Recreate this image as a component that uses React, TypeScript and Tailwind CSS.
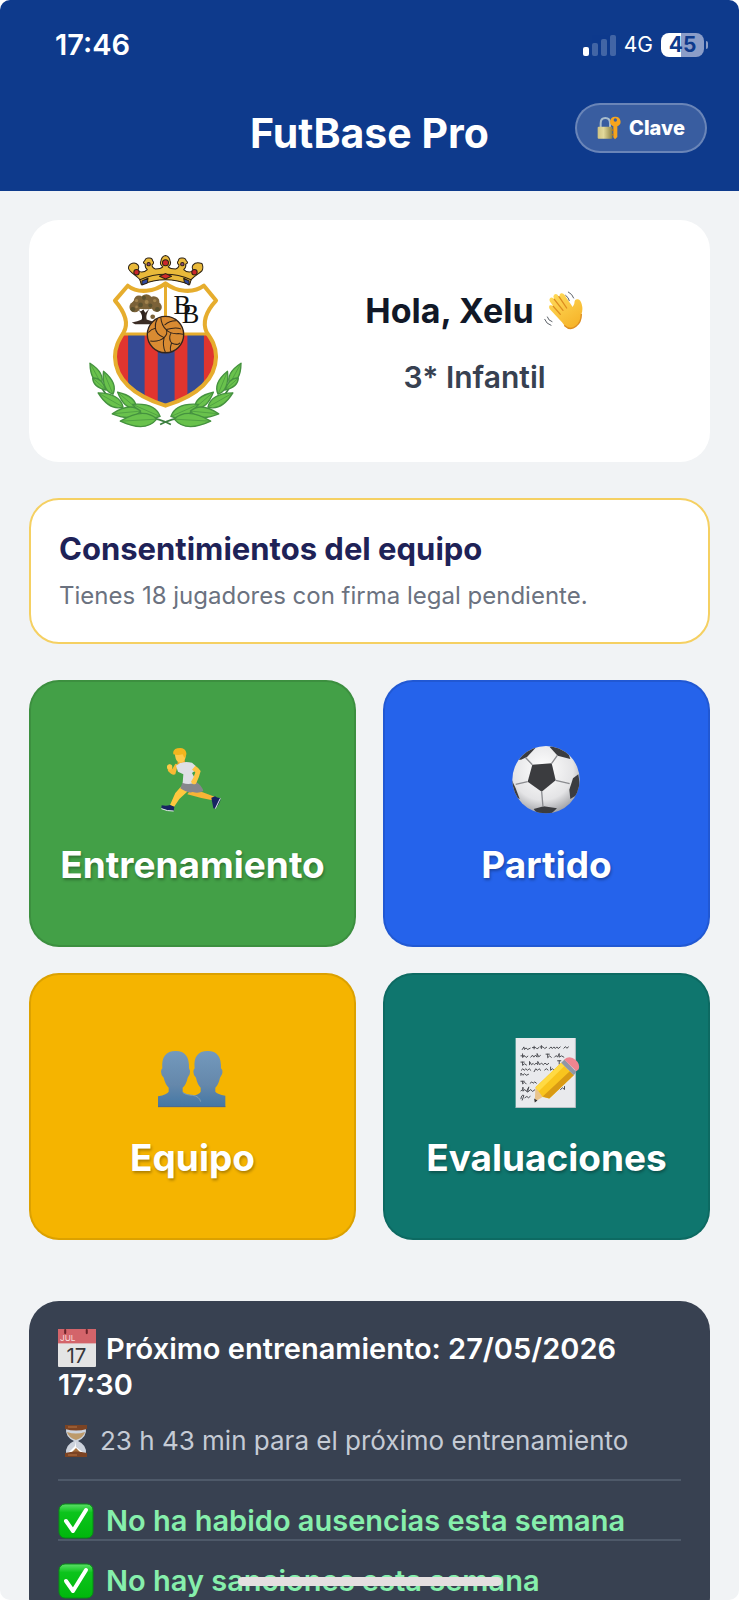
import type { ReactNode } from "react";

type IconProps = { className?: string };

const leaves = [
  [64, 364, 98, 426],
  [104, 388, 132, 456],
  [88, 452, 162, 494],
  [146, 450, 202, 498],
  [112, 444, 72, 408],
  [190, 486, 272, 522],
  [130, 514, 214, 506],
  [154, 536, 262, 530],
];

function leafPath([x1, y1, x2, y2]: number[]) {
  const nx = -(y2 - y1) * 0.36;
  const ny = (x2 - x1) * 0.36;
  const mx = (x1 + x2 * 2) / 3;
  const my = (y1 + y2 * 2) / 3;
  return `M${x1} ${y1}Q${mx + nx} ${my + ny} ${x2} ${y2}Q${mx - nx} ${my - ny} ${x1} ${y1}Z`;
}

function Branch() {
  return (
    <g>
      <path d="M68 372C92 452 150 512 232 524Q270 528 304 546" fill="none" stroke="#3d8040" strokeWidth="5" />
      {leaves.map((l) => (
        <g key={l.join()} stroke="#45923f" strokeLinejoin="round">
          <path d={leafPath(l)} fill="#69c24c" strokeWidth="4" />
          <path d={`M${l[0]} ${l[1]}L${l[2]} ${l[3]}`} strokeWidth="2" />
        </g>
      ))}
    </g>
  );
}

function Crest({ className }: IconProps) {
  const shield =
    "M176 134C206 158 256 152 288 127C320 152 370 158 402 134L438 178C412 206 396 240 410 272C424 292 438 312 438 345C436 420 370 464 288 490C206 464 140 420 138 345C138 312 152 292 164 272C182 240 162 206 138 178Z";
  return (
    <svg viewBox="58 40 460 516" className={className} role="img" aria-label="Escudo del club">
      <defs>
        <clipPath id="shield">
          <path d={shield} />
        </clipPath>
      </defs>
      <Branch />
      <g transform="translate(576 0) scale(-1 1)">
        <Branch />
      </g>
      <g clipPath="url(#shield)">
        <path d="M120 110H450V280H120Z" fill="#fff" />
        <path d="M120 278H450V500H120Z" fill="#e0352f" />
        <path d="M177 278H226V500H177ZM265 278H315V500H265ZM353 278H402V500H353Z" fill="#354a94" />
        <path d="M130 277H446M288 120V240" stroke="#e6ad2e" strokeWidth="9" />
      </g>
      <path d={shield} fill="none" stroke="#e6ad2e" strokeWidth="12" strokeLinejoin="round" />
      <path d="M188 243Q205 240 218 234Q222 222 208 206L218 212L222 204L228 214L240 202Q228 222 232 234Q246 238 258 243L250 248H198Z" fill="#3a2c24" />
      <g fill="#7b6238">
        <ellipse cx="229" cy="187" rx="40" ry="17" />
        <circle cx="197" cy="197" r="16" />
        <circle cx="209" cy="178" r="15" />
        <circle cx="231" cy="176" r="17" />
        <circle cx="253" cy="182" r="17" />
        <circle cx="262" cy="197" r="15" />
        <circle cx="250" cy="226" r="7" />
      </g>
      <g fill="#5a512f">
        <circle cx="191" cy="204" r="7" />
        <circle cx="214" cy="191" r="7" />
        <circle cx="243" cy="193" r="6" />
        <circle cx="264" cy="204" r="7" />
        <circle cx="224" cy="170" r="6" />
      </g>
      <g fill="#a0824d">
        <circle cx="202" cy="178" r="5" />
        <circle cx="232" cy="182" r="6" />
        <circle cx="256" cy="178" r="5" />
        <circle cx="202" cy="197" r="4" />
      </g>
      <path d="M220 236Q226 222 218 208" stroke="#2d231e" strokeWidth="7" fill="none" />
      <g fontFamily="'Liberation Serif', serif" fontSize="78" fill="#111">
        <text x="312" y="217">B</text>
        <text x="336" y="246">B</text>
      </g>
      <circle cx="288" cy="279" r="54" fill="#d98b32" stroke="#33251c" strokeWidth="4" />
      <g fill="none" stroke="#33251c" strokeWidth="3" strokeLinecap="round">
        <path d="M274 228Q276 252 290 264Q318 256 333 262M290 264Q296 276 284 288M284 288Q258 278 258 258Q256 246 264 232M258 260Q246 262 238 272M284 288Q266 302 244 298M284 288Q278 312 288 332M290 264Q302 278 326 276L340 278M304 274Q296 292 306 304Q322 312 330 304M306 304Q300 322 304 328M286 250Q300 238 318 238" />
      </g>
      <g stroke="#2c2114" strokeWidth="3" strokeLinejoin="round">
        <path d="M212 116C204 104 176 92 178 80C180 66 198 62 206 72C212 80 204 90 204 90Q222 98 234 86Q226 80 228 70Q218 66 226 60Q230 50 238 52Q248 50 250 60Q256 66 248 72Q248 82 258 84Q274 84 280 78Q270 70 274 62Q276 46 288 44Q300 46 302 62Q306 70 296 78Q302 84 318 84Q328 82 328 72Q320 66 326 60Q328 50 338 52Q346 50 350 60Q358 66 348 70Q350 80 342 86Q354 98 372 90Q364 80 370 72Q378 62 396 68Q402 80 396 90C388 98 374 104 364 116L358 130Q288 100 218 130Z" fill="#e9b93a" />
        <path d="M212 116Q288 84 364 116L360 130Q288 102 216 130Z" fill="#e9b93a" />
        <path d="M270 106L288 98L306 106L288 114Z" fill="#cf2a2a" />
        <path d="M218 120L236 112L234 126L218 132ZM358 120L342 112L344 124L358 132Z" fill="#30489c" />
        <circle cx="202" cy="94" r="8" fill="#c9262b" />
        <circle cx="374" cy="94" r="8" fill="#c9262b" />
        <circle cx="288" cy="66" r="9" fill="#c9262b" />
        <circle cx="238" cy="70" r="5" fill="#8a4a78" />
        <circle cx="338" cy="70" r="5" fill="#8a4a78" />
      </g>
    </svg>
  );
}

function LockKey({ className }: IconProps) {
  return (
    <svg viewBox="0 0 72 72" className={className} aria-hidden="true">
      <defs>
        <linearGradient id="lock">
          <stop offset="0" stopColor="#cfc383" />
          <stop offset=".4" stopColor="#e2d99a" />
          <stop offset="1" stopColor="#8d8243" />
        </linearGradient>
      </defs>
      <path d="M11 36V22Q11 6 25 6Q39 6 39 22V36" fill="none" stroke="#a9bccb" strokeWidth="6" />
      <rect x="2" y="32" width="44" height="36" rx="3" fill="url(#lock)" />
      <path d="M55 2A15 15 0 0 0 49 31V64L54 70L61 63V31A15 15 0 0 0 55 2ZM55 7A5 5 0 0 1 55 17A5 5 0 0 1 55 7Z" fill="#f6a41c" fillRule="evenodd" />
      <path d="M49 38L43 42L49 46M49 52L44 56L49 60" fill="#c77b10" />
    </svg>
  );
}

function Wave({ className }: IconProps) {
  return (
    <svg viewBox="0 0 120 120" className={className} aria-hidden="true">
      <defs>
        <linearGradient id="hand" x1="0" y1="0" x2=".6" y2="1">
          <stop offset="0" stopColor="#ffdc5c" />
          <stop offset="1" stopColor="#f6b52b" />
        </linearGradient>
      </defs>
      <path d="M54 94L17 54Q13 46 18 43Q23 41 28 46L18 32Q14 23 20 20Q26 18 31 25L28 17Q29 8 36 9Q41 10 45 17L48 21Q44 10 51 7Q57 5 62 12L86 48Q92 40 92 30Q94 23 102 25Q110 27 113 39Q118 56 112 70Q112 94 96 106Q79 120 62 104Z" fill="url(#hand)" />
      <path d="M31 25L57 58M45 17L68 51M28 46L49 70M62 104Q79 120 96 106Q112 94 112 70" fill="none" stroke="#dd8d20" strokeWidth="4" strokeLinecap="round" />
      <path d="M65 13Q74 19 76 29M73 3Q85 9 89 21M10 78Q13 89 24 92M2 85Q7 99 21 103" fill="none" stroke="#5c6168" strokeWidth="3" strokeLinecap="round" />
    </svg>
  );
}

function Runner({ className }: IconProps) {
  return (
    <svg viewBox="52 48 210 210" className={className} aria-hidden="true">
      <path d="M150 182L186 190L222 203L216 214L182 207L140 196Z" fill="#f7b436" />
      <path d="M122 172L142 186L116 210L100 234L88 228L104 192Z" fill="#ffc83e" />
      <path d="M212 206L223 202Q230 208 239 207Q241 216 234 226L224 239L218 238Z" fill="#172462" />
      <path d="M239 208L224 239" stroke="#e7e9ef" strokeWidth="3" />
      <path d="M88 228L101 233L99 246Q78 246 62 238L63 229Q78 232 88 228Z" fill="#172462" />
      <path d="M62 239Q80 247 99 246" stroke="#e7e9ef" strokeWidth="3" fill="none" />
      <path d="M126 160L166 158Q184 170 188 186Q174 194 156 189Q142 194 119 178Z" fill="#85868c" />
      <path d="M112 106L104 136Q94 140 82 126L80 112L88 106L95 120L104 104Z" fill="#f9b934" />
      <circle cx="87" cy="114" r="8" fill="#ffca48" />
      <path d="M110 106H134L132 92H112Z" fill="#eea52f" />
      <path d="M106 110Q124 94 154 101L166 112L162 126L154 132L168 158Q148 170 126 162L128 136L112 128Z" fill="#dedfe5" />
      <path d="M164 110Q176 118 180 126Q176 144 166 164Q156 170 151 158L158 146L164 130L154 122Z" fill="#ffc444" />
      <path d="M102 72Q106 62 122 62Q136 68 135 84Q132 102 118 101Q106 98 104 84Z" fill="#ffc94a" />
      <path d="M98 76Q95 62 110 58Q130 53 136 68Q140 78 131 86L126 76Q112 80 98 76Z" fill="#f3b51e" />
    </svg>
  );
}

function Ball({ className }: IconProps) {
  return (
    <svg viewBox="65 48 210 210" className={className} aria-hidden="true">
      <defs>
        <radialGradient id="ball" cx=".45" cy=".35" r=".65">
          <stop offset="0" stopColor="#fff" />
          <stop offset=".7" stopColor="#e4e4e6" />
          <stop offset="1" stopColor="#a5a6aa" />
        </radialGradient>
        <clipPath id="ballClip">
          <circle cx="167" cy="152" r="101" />
        </clipPath>
      </defs>
      <circle cx="167" cy="152" r="101" fill="url(#ball)" />
      <g clipPath="url(#ballClip)">
        <g fill="#3b3c3f">
          <path d="M126 107L184 103L196 154L154 188L112 158Z" />
          <path d="M92 92L110 84L136 56L110 50L76 92Z" />
          <path d="M178 54L202 80L240 90L228 54L190 46Z" />
          <path d="M264 136L248 148L237 182L240 210L272 190Z" />
          <path d="M62 148L76 178L88 210L64 200Z" />
          <path d="M130 240L160 232L200 238L176 260H146Z" />
        </g>
        <path d="M126 107L106 86M184 103L201 79M196 154L238 164M154 188L158 234M112 158L76 166" stroke="#8b8c90" strokeWidth="4" />
      </g>
    </svg>
  );
}

function People({ className }: IconProps) {
  return (
    <svg viewBox="54 27 210 210" className={className} aria-hidden="true">
      <defs>
        <linearGradient id="people" x1="0" y1="0" x2="0" y2="1">
          <stop offset="0" stopColor="#7399bd" />
          <stop offset=".6" stopColor="#6588ab" />
          <stop offset="1" stopColor="#4377a5" />
        </linearGradient>
      </defs>
      <path d="M203 66C232 66 244 84 243 118Q250 124 246 136L240 146Q236 166 226 176V188Q232 196 256 200V234H152V202Q180 196 182 188V176Q172 166 168 146Q160 138 160 128Q160 122 164 118C160 84 174 66 203 66Z" fill="url(#people)" />
      <path d="M107 66C136 66 148 84 147 118Q152 124 149 136L143 146Q139 166 128 176V188Q134 196 158 199Q180 202 184 218V234H54V202Q82 196 86 188V176Q76 166 71 146Q63 138 63 128Q63 122 67 118C64 84 78 66 107 66Z" fill="url(#people)" />
      <path d="M128 190Q136 198 158 199Q178 202 182 218" fill="none" stroke="#7d9db4" strokeWidth="3" />
      <path d="M54 233H256" stroke="#52698a" strokeWidth="3" />
    </svg>
  );
}

function Memo({ className }: IconProps) {
  return (
    <svg viewBox="65 57 212 212" className={className} aria-hidden="true">
      <path d="M76 57H257V268H76Z" fill="#e9eaed" />
      <path d="M76 268H257V57" fill="none" stroke="#b9bec3" strokeWidth="3" />
      <g fill="none" stroke="#4a4b50" strokeWidth="3" strokeLinecap="round">
        <path d="M96 92l5 -8l2 8l5 -5l4 5l8 -4M132 90v-8m-5 4h10l4 4l5 -4M154 89v-9m-4 4h9l5 5l6 -4M178 89l5 -5l4 5l5 -5l4 5l5 -5l4 5l6 -5M222 88l5 -5l4 5l5 -4" />
        <path d="M92 111h10m-5 -6v11l6 -5l5 5l5 -4M122 115l5 -6l4 6l5 -6l5 6v-11l5 10l5 -4M168 106h10m-5 0v11l6 -6l5 5M194 115l5 -5l4 5l5 -11v11l7 -4l7 4" />
        <path d="M92 130h10m-5 0v10l6 -5l6 4M118 138v-10l6 10l5 -4l4 4l5 -5l5 5v-10l6 10l5 -5l6 5l5 -5l6 5l5 -4M203 126h10m-5 0v10" />
        <path d="M93 155l5 -5l4 5l5 -5l5 5l5 -5l5 5M132 159l5 -9l5 5l5 -5l5 5M164 154l5 -4l5 4M182 145v10l5 -5l6 5" />
        <path d="M92 170v-7l6 7l5 -5l5 5l7 -3M92 188h10m-5 0v8l6 -5l5 5M120 194l5 -4l4 4l5 -4l5 4" />
        <path d="M92 217l6 -4v-7v12l6 -5l5 6l7 -14l-4 16l10 -8l5 6l7 -5M92 241q2 -14 9 -10l-5 14M104 238l6 -4l5 4l5 -4M212 213l6 -5l6 5v-9" />
      </g>
      <path d="M134 250L136 206L160 234Z" fill="#e9c48c" />
      <path d="M134 252L132 240L142 246Z" fill="#2f3032" />
      <path d="M136 206L214 132L252 170L178 240L158 236Z" fill="#f9c51e" />
      <path d="M158 234L240 158L252 170L178 240Z" fill="#d99a14" />
      <path d="M136 208L214 132L224 142L146 218Z" fill="#ffda43" />
      <path d="M214 132L224 122L260 160L252 170Z" fill="#9097a5" />
      <path d="M223 122Q240 108 258 124Q272 136 267 152L260 158Z" fill="#ef8590" />
    </svg>
  );
}

function CalendarIcon({ className }: IconProps) {
  return (
    <svg viewBox="0 0 37 37" className={className} aria-hidden="true">
      <rect width="37" height="37" rx="1" fill="#e4e4e4" />
      <rect width="37" height="14" fill="#d3646a" />
      <path d="M7 1V4M28 1V4" stroke="#6b2228" strokeWidth="2" strokeLinecap="round" />
      <g fontFamily="Inter, sans-serif" fontWeight="400">
        <text x="2" y="12" fontSize="8" fill="#f7dcdc">JUL</text>
        <text x="18" y="33" fontSize="20" textAnchor="middle" fill="#37373a">17</text>
      </g>
    </svg>
  );
}

function Hourglass({ className }: IconProps) {
  return (
    <svg viewBox="0 0 24 32" className={className} aria-hidden="true">
      <path d="M2 3H22Q23 12 14 16Q23 20 22 29H2Q1 20 10 16Q1 12 2 3Z" fill="#cdd3dd" />
      <path d="M3 7Q12 10 21 7Q20 12 12 15Q4 12 3 7Z" fill="#bd9a6a" />
      <path d="M12 16V22L20 28H4L11 21Z" fill="#fff" />
      <path d="M12 23L17 28H7Z" fill="#a6703d" />
      <path d="M1 0H23V4Q12 7 1 4ZM1 32H23V28Q12 25 1 28Z" fill="#7b4323" />
      <path d="M4 2H13M4 30H13" stroke="#b87543" strokeWidth="1" />
    </svg>
  );
}

function Check({ className }: IconProps) {
  return (
    <svg viewBox="0 0 36 36" className={className} aria-hidden="true">
      <defs>
        <linearGradient id="check" x1="0" y1="0" x2="0" y2="1">
          <stop offset="0" stopColor="#5ee06a" />
          <stop offset=".25" stopColor="#0cc41c" />
          <stop offset="1" stopColor="#00b70c" />
        </linearGradient>
      </defs>
      <rect x="1" y="1" width="34" height="34" rx="6" fill="url(#check)" stroke="#078c16" />
      <path d="M8 18L15 28L28 7" fill="none" stroke="#fff" strokeWidth="4" strokeLinecap="round" strokeLinejoin="round" />
    </svg>
  );
}

const tiles = [
  { label: "Entrenamiento", icon: Runner, color: "bg-[#43a047]" },
  { label: "Partido", icon: Ball, color: "bg-[#2563eb]" },
  { label: "Equipo", icon: People, color: "bg-[#f5b400]" },
  { label: "Evaluaciones", icon: Memo, color: "bg-[#0f766e]" },
];

function StatusBar() {
  return (
    <div className="flex items-center justify-between pr-[31px] pl-[55px]">
      <span className="text-[29px] leading-8 font-semibold">17:46</span>
      <div className="flex items-center gap-2">
        <svg viewBox="0 0 33 22" className="h-[22px] w-[33px]" aria-label="Cobertura">
          <rect y="13" width="6" height="9" rx="2" fill="#fff" />
          <g fill="#fff" opacity=".22">
            <rect x="9" y="9" width="6" height="13" rx="2" />
            <rect x="18" y="5" width="6" height="17" rx="2" />
            <rect x="27" y="1" width="6" height="21" rx="2" />
          </g>
        </svg>
        <span className="text-[21px] leading-6">4G</span>
        <div className="flex items-center gap-0.5">
          <span className="h-6 w-[43px] rounded-lg bg-linear-to-r from-white from-47% to-[#8b9dc8] to-47% text-center text-[21px] leading-6 font-bold text-[#0e3a8c]">
            45
          </span>
          <span className="h-2 w-0.5 rounded-r-full bg-[#8b9dc8]" />
        </div>
      </div>
    </div>
  );
}

function WeekNote({ children }: { children: ReactNode }) {
  return (
    <li className="flex items-center gap-3 border-t-2 border-[#4e5969] pt-[22px]">
      <Check className="size-9 shrink-0" />
      <span className="text-[29px] leading-9 font-semibold text-[#86efac]">{children}</span>
    </li>
  );
}

export default function App() {
  return (
    <div className="h-screen bg-white font-[Inter,'Noto_Sans',sans-serif]">
      <div className="flex h-full flex-col overflow-hidden rounded-[10px] bg-[#f1f3f5]">
        <header className="shrink-0 bg-[#0e3a8c] pt-[29px] pb-8 text-white">
          <StatusBar />
          <div className="mt-[42px] grid grid-cols-[1fr_auto_1fr] items-start px-8">
            <h1 className="col-start-2 mt-1 text-[41px] leading-[52px] font-bold whitespace-nowrap">FutBase Pro</h1>
            <button
              type="button"
              className="flex h-[50px] items-center gap-2 justify-self-end rounded-full border-2 border-white/25 bg-white/18 px-5 text-xl font-extrabold"
            >
              <LockKey className="size-6" />
              Clave
            </button>
          </div>
        </header>

        <main className="flex-1 overflow-y-auto px-[29px] pt-[29px] [scrollbar-width:none]">
          <section className="flex items-center rounded-[30px] bg-white px-[31px] py-[34px]">
            <div className="flex w-[210px] shrink-0 justify-center">
              <Crest className="h-[174px] w-[155px]" />
            </div>
            <div className="flex flex-1 flex-col items-center gap-6 pt-1">
              <h2 className="flex items-center gap-2.5 text-[34px] leading-[44px] font-bold text-[#111827]">
                Hola, Xelu
                <Wave className="size-10" />
              </h2>
              <p className="text-[30px] leading-10 font-semibold text-[#374151]">3* Infantil</p>
            </div>
          </section>

          <section className="mt-9 rounded-[30px] border-2 border-[#f5d062] bg-white px-7 pt-[29px] pb-7">
            <h2 className="text-[31px] leading-10 font-bold text-[#1e2257]">Consentimientos del equipo</h2>
            <p className="mt-[9px] text-2xl leading-9 text-[#6b7280]">Tienes 18 jugadores con firma legal pendiente.</p>
          </section>

          <nav className="mt-9 grid grid-cols-2 gap-x-[27px] gap-y-[26px]">
            {tiles.map(({ label, icon: Icon, color }) => (
              <button
                key={label}
                type="button"
                className={`flex h-[267px] flex-col items-center justify-center gap-6 rounded-[30px] border-2 border-black/10 pt-2 text-white ${color}`}
              >
                <Icon className="size-[70px]" />
                <span className="text-[37px] leading-[52px] font-bold text-shadow-[1px_2px_3px_rgb(0_0_0/0.3)]">{label}</span>
              </button>
            ))}
          </nav>

          <section className="mt-[61px] rounded-[30px] bg-[#384151] px-[29px] pt-7 pb-7">
            <h2 className="text-[29px] leading-9 font-semibold text-white">
              <CalendarIcon className="mr-2.5 inline size-[38px] align-[-8px]" />
              Próximo entrenamiento: 27/05/2026 17:30
            </h2>
            <p className="mt-5 mb-5 flex items-center gap-3 pl-1.5 text-[26px] leading-9 text-[#c5cbd5]">
              <Hourglass className="h-8 w-6 shrink-0" />
              23 h 43 min para el próximo entrenamiento
            </p>
            <ul>
              <WeekNote>No ha habido ausencias esta semana</WeekNote>
              <WeekNote>No hay sanciones esta semana</WeekNote>
            </ul>
          </section>
        </main>
      </div>
      <div className="fixed inset-x-0 bottom-3.5 mx-auto h-[9px] w-[264px] rounded-full bg-[#e4dfe0]" />
    </div>
  );
}
